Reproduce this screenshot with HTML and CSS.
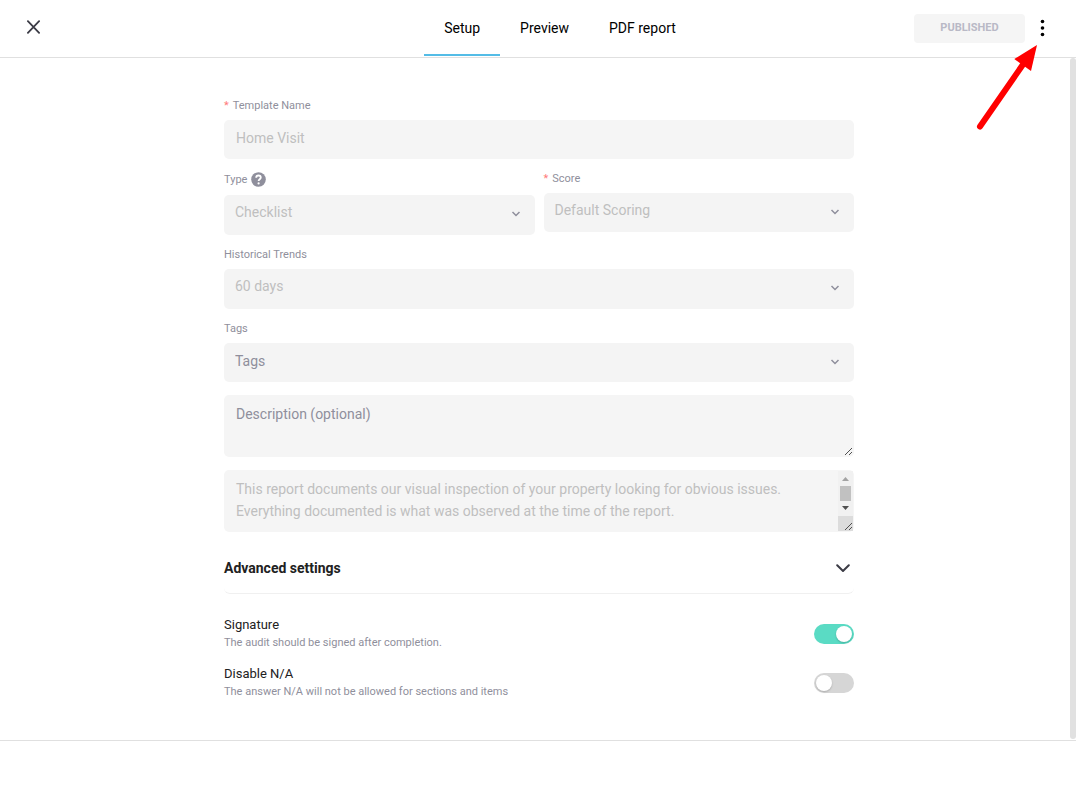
FILE: index.html
```
<!DOCTYPE html>
<html lang="en">
<head>
<meta charset="utf-8">
<meta name="viewport" content="width=device-width, initial-scale=1">
<title>Template setup</title>
<link rel="stylesheet" href="styles.css">
</head>
<body>
<header class="topbar">
  <button class="icon-button close" type="button" aria-label="Close">
    <svg width="15" height="14" viewBox="0 0 15 14" aria-hidden="true"><path d="M1.900 1.200 13.100 12.800M13.100 1.200 1.900 12.800" fill="none" stroke="#3b3b45" stroke-width="1.800" stroke-linecap="round"/></svg>
  </button>
  <nav class="tabs">
    <a class="tab tab-active" href="#setup">Setup</a>
    <a class="tab" href="#preview">Preview</a>
    <a class="tab" href="#pdf">PDF report</a>
  </nav>
  <div class="actions">
    <button class="published" type="button" disabled>PUBLISHED</button>
    <button class="icon-button more" type="button" aria-label="More options">
      <svg width="6" height="18" viewBox="0 0 6 18" aria-hidden="true"><circle cx="3.500" cy="2.500" r="1.800"/><circle cx="3.500" cy="9" r="1.800"/><circle cx="3.500" cy="15.500" r="1.800"/></svg>
    </button>
    <svg class="pointer" width="66" height="90" viewBox="0 0 66 90" aria-hidden="true"><path d="M9 86.500 53 23" stroke="#f00" stroke-width="6" stroke-linecap="round"/><path d="M66 5 43.300 19 60 31Z" fill="#f00"/></svg>
  </div>
</header>

<main class="content">
  <form class="form" id="setup">
    <div class="fields">
      <div class="field">
        <label class="label" for="name"><span class="required">*</span>Template Name</label>
        <input class="control" id="name" type="text" value="Home Visit" disabled>
      </div>
      <div class="row">
        <div class="field">
          <div class="label label-help">
            <label for="type">Type</label>
            <svg width="15" height="17" viewBox="0 0 15 17" aria-hidden="true"><circle cx="7.500" cy="7.500" r="7.300" fill="#8f8f9c"/><path d="M5.200 5.800C5.200 4.400 6.100 3.500 7.500 3.500S9.800 4.400 9.800 5.600C9.800 7.100 7.600 7.300 7.600 9" fill="none" stroke="#fff" stroke-width="1.800"/><circle cx="7.600" cy="11.400" r="1.100" fill="#fff"/></svg>
          </div>
          <div class="select select-tall">
            <select class="control" id="type" disabled><option>Checklist</option></select>
            <svg class="chevron" width="10" height="8" viewBox="0 0 10 8" aria-hidden="true"><path d="M1.500 1 5 4.500 8.500 1"/></svg>
          </div>
        </div>
        <div class="field">
          <label class="label" for="score"><span class="required">*</span>Score</label>
          <div class="select">
            <select class="control" id="score" disabled><option>Default Scoring</option></select>
            <svg class="chevron" width="10" height="8" viewBox="0 0 10 8" aria-hidden="true"><path d="M1.500 1 5 4.500 8.500 1"/></svg>
          </div>
        </div>
      </div>
      <div class="field">
        <label class="label" for="trends">Historical Trends</label>
        <div class="select select-tall">
          <select class="control" id="trends" disabled><option>60 days</option></select>
          <svg class="chevron" width="10" height="8" viewBox="0 0 10 8" aria-hidden="true"><path d="M1.500 1 5 4.500 8.500 1"/></svg>
        </div>
      </div>
      <div class="field">
        <label class="label" for="tags">Tags</label>
        <div class="select">
          <select class="control" id="tags"><option>Tags</option></select>
          <svg class="chevron" width="10" height="8" viewBox="0 0 10 8" aria-hidden="true"><path d="M1.500 1 5 4.500 8.500 1"/></svg>
        </div>
      </div>
    </div>

    <div class="notes">
      <div class="area">
        <textarea class="control" aria-label="Description" placeholder="Description (optional)"></textarea>
        <svg class="grip" width="15" height="15" viewBox="0 0 15 15" aria-hidden="true"><path d="M7 14 14 7M11 14 14 11"/></svg>
      </div>
      <div class="area">
        <textarea class="control with-scroll" aria-label="Disclaimer" disabled>This report documents our visual inspection of your property looking for obvious issues. Everything documented is what was observed at the time of the report.</textarea>
        <svg class="grip" width="15" height="60" viewBox="0 0 15 60" aria-hidden="true"><rect width="15" height="45" fill="#f1f1f1"/><rect y="45" width="15" height="15" fill="#dcdcdc"/><rect x="2" y="15" width="11" height="15" fill="#c1c1c1"/><path class="solid" d="M4 10 7.500 6 11 10Z" fill="#a3a3a3"/><path class="solid" d="M4 35H11L7.500 39Z" fill="#505050"/><path d="M7 59 14 52M11 59 14 56"/></svg>
      </div>
    </div>

    <button class="advanced" type="button">
      Advanced settings
      <svg width="14" height="8" viewBox="0 0 14 8" aria-hidden="true"><path d="M1.200 1.200 7 7 12.800 1.200" fill="none" stroke="#3b3b45" stroke-width="2" stroke-linecap="round"/></svg>
    </button>

    <div class="options">
      <div class="option">
        <div>
          <label class="option-name" for="signature">Signature</label>
          <p class="option-help">The audit should be signed after completion.</p>
        </div>
        <input class="switch" id="signature" type="checkbox" role="switch" checked>
      </div>
      <div class="option">
        <div>
          <label class="option-name" for="disable-na">Disable N/A</label>
          <p class="option-help">The answer N/A will not be allowed for sections and items</p>
        </div>
        <input class="switch" id="disable-na" type="checkbox" role="switch">
      </div>
    </div>
  </form>
  <div class="scrollbar" aria-hidden="true"></div>
</main>
<footer class="footer"></footer>
</body>
</html>
```
FILE: styles.css
```
* {
  box-sizing: border-box;
}

body {
  display: flex;
  flex-direction: column;
  min-height: 100vh;
  margin: 0;
  background: #fff;
  color: #212121;
  font-family: Roboto, "Liberation Sans", sans-serif;
  font-size: 14px;
}

button,
input,
select,
textarea {
  font: inherit;
}

svg {
  display: block;
}

.topbar {
  display: grid;
  grid-template-columns: 1fr auto 1fr;
  height: 58px;
  border-bottom: 1px solid #e0e0e0;
}

.icon-button {
  padding: 0;
  border: 0;
  background: none;
}

.close {
  justify-self: start;
  align-self: center;
  padding: 0 26px 3px;
}

.more {
  padding-bottom: 2px;
}

.tabs {
  display: flex;
  margin-left: 44px;
}

.tab {
  height: 56px;
  padding: 0 20px;
  color: #000;
  line-height: 56px;
  text-decoration: none;
}

.tab-active {
  border-bottom: 2px solid #54bce6;
}

.actions {
  position: relative;
  display: flex;
  align-items: center;
  justify-content: flex-end;
  gap: 14px;
  padding-right: 31px;
}

.published {
  width: 111px;
  height: 29px;
  padding: 0 0 2px;
  border: 0;
  border-radius: 4px;
  background: #f5f5f5;
  color: #b9b9c6;
  font-size: 11px;
  font-weight: 700;
}

.pointer {
  position: absolute;
  top: 40px;
  right: 39px;
  z-index: 1;
}

.content {
  display: flex;
  flex: 1;
  padding-left: 8px;
}

.form {
  width: 100%;
  max-width: 630px;
  margin: 0 auto;
  padding: 40px 0 32px;
}

.scrollbar {
  width: 6px;
  margin-bottom: 1px;
  border-radius: 3px;
  background: #e1e1e1;
}

.fields {
  display: grid;
  gap: 12px;
}

.row {
  display: grid;
  grid-template-columns: 1fr 1fr;
  align-items: start;
  gap: 9px;
}

.label {
  display: block;
  margin-bottom: 6px;
  color: #8f8f9c;
  font-size: 11px;
  line-height: 16px;
}

.label-help {
  display: flex;
  align-items: center;
  gap: 4px;
  height: 18px;
}

.required {
  margin-right: 4px;
  color: #ff7b7b;
}

.control {
  display: block;
  width: 100%;
  height: 39px;
  margin: 0;
  padding: 0 12px 3px;
  border: 0;
  border-radius: 5px;
  appearance: none;
  background: #f5f5f5;
  color: #8f8f9c;
  opacity: 1;
}

.control:disabled {
  color: #bfbfbf;
}

.select,
.area {
  display: grid;
}

.select > *,
.area > * {
  grid-area: 1 / 1;
}

.select .control {
  padding: 0 11px 3px;
  background: #f4f4f4;
}

.select .control:disabled {
  padding-bottom: 5px;
}

.select-tall .control {
  height: 40px;
}

.select-tall .control:disabled {
  padding-bottom: 7px;
}

.chevron {
  justify-self: end;
  align-self: center;
  margin-right: 14px;
  pointer-events: none;
}

.chevron path {
  fill: none;
  stroke: #8f8f9c;
  stroke-width: 1.5;
}

.notes {
  display: grid;
  gap: 13px;
  margin-top: 13px;
}

.area .control {
  height: 62px;
  padding: 8px 12px;
  line-height: 22px;
  overflow: hidden;
  resize: none;
}

.area .with-scroll {
  padding-right: 28px;
}

.control::placeholder {
  color: #8f8f9c;
  opacity: 1;
}

.grip {
  justify-self: end;
  align-self: end;
  margin: 1px;
  pointer-events: none;
}

.grip path {
  stroke: #505050;
  stroke-width: 1;
}

.grip .solid {
  stroke: none;
}

.advanced {
  display: flex;
  align-items: center;
  justify-content: space-between;
  width: 100%;
  height: 50px;
  margin-top: 12px;
  padding: 0 4px 1px 0;
  border: 0;
  border-bottom: 1px solid #f0f0f0;
  border-radius: 6px;
  background: none;
  color: #212121;
  font-weight: 700;
}

.options {
  display: grid;
  gap: 13px;
  margin-top: 22px;
}

.option {
  display: flex;
  align-items: center;
  justify-content: space-between;
}

.option-name {
  display: block;
  font-size: 13px;
  line-height: 18px;
}

.option-help {
  margin: 0;
  color: #8f8f9c;
  font-size: 11px;
  line-height: 18px;
}

.switch {
  display: flex;
  width: 40px;
  height: 20px;
  margin: 0;
  padding: 2px;
  border-radius: 10px;
  appearance: none;
  background: #d6d6d6;
}

.switch::before {
  content: "";
  width: 16px;
  height: 16px;
  border-radius: 50%;
  background: #fff;
  box-shadow: 0 1px 2px rgba(0, 0, 0, 0.2);
}

.switch:checked {
  justify-content: flex-end;
  background: #5adbc4;
}

.footer {
  height: 58px;
  border-top: 1px solid #e0e0e0;
}
```
